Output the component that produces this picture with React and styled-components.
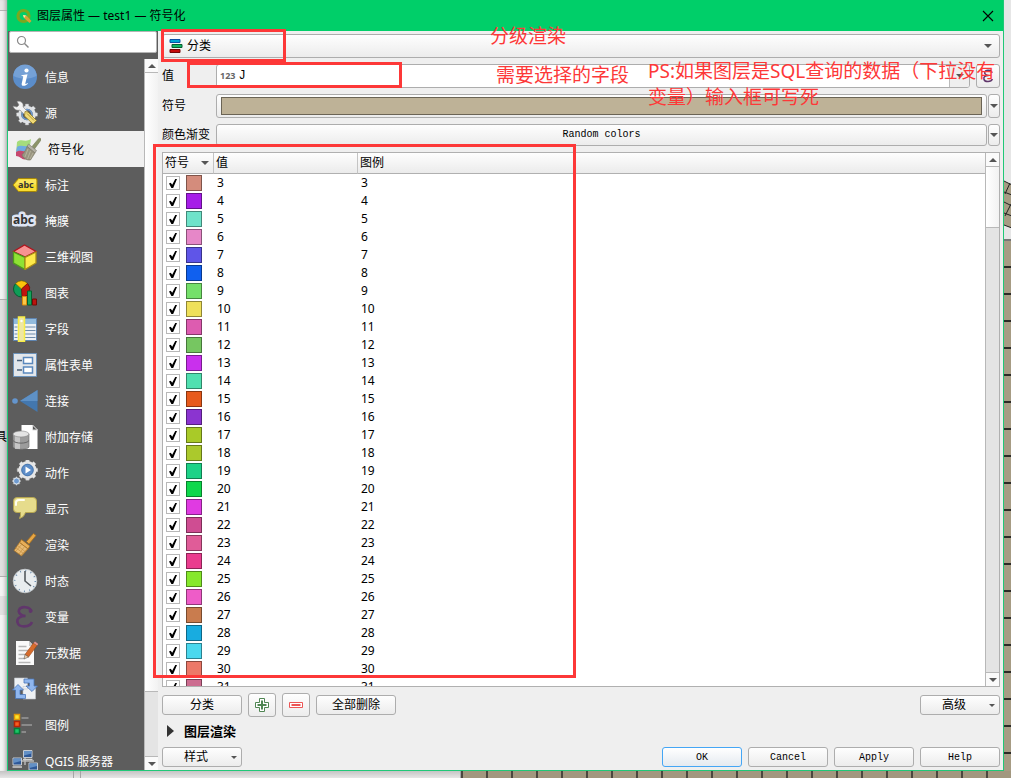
import { useState } from 'react';
import styled, { createGlobalStyle, css } from 'styled-components';

const GlobalStyle = createGlobalStyle`
    * {
        box-sizing: border-box;
    }
    body {
        margin: 0;
        font-family: 'Noto Sans', 'Noto Sans CJK SC', sans-serif;
        font-size: 12px;
        line-height: 18px;
        color: #000;
    }
    button, input, select {
        font: inherit;
        color: inherit;
        margin: 0;
        padding: 0;
    }
`;

const raised = css`
    border: 1px solid #adadad;
    border-radius: 3px;
    background: linear-gradient(#fefefe, #ececec);
`;

/* ---------- desktop behind the dialog ---------- */

const Desktop = styled.div`
    position: relative;
    display: grid;
    grid-template-columns: 7px 1fr 7px;
    grid-template-rows: 1fr 7px;
    height: 100vh;
    overflow: hidden;
    background: #e4e4e4;
`;

const LeftEdge = styled.div`
    display: flex;
    justify-content: flex-end;
    overflow: hidden;
    padding-top: 428px;
    box-shadow: inset -4px 0 4px -3px #999;
    background: linear-gradient(
        #e6e6e6 10px, #b5b5b5 10px 11px, #f3f3f3 11px 299px, #b0b0b0 299px 300px,
        #e0e0e0 300px 576px, #b0b0b0 576px 577px, #f4f4f4 577px 596px,
        #e2e2e2 596px 615px, #f4f4f4 615px
    );
`;

const RightEdge = styled.div`
    display: flex;
    flex-direction: column;
    overflow: hidden;
    background: #e6e6e6;
    svg {
        display: block;
        flex: none;
        margin-top: 180px;
    }
`;

const MapColumn = styled.div`
    flex: 1;
    margin-top: 9px;
    border-top: 2px solid #777;
    background: repeating-linear-gradient(#a79c84 0 25px, #2c2a26 25px 27px);
`;

const BottomEdge = styled.div`
    grid-column: 1 / -1;
    display: flex;
    background: linear-gradient(#c4c4c4, #e6e6e6);
`;

const EdgePiece = styled.div`
    width: ${({ $width }) => $width}px;
    border-right: 1px solid #a5a5a5;
`;

const MapRow = styled.div`
    flex: 1;
    background: repeating-linear-gradient(90deg, #4b473f 0 2px, #a2977f 2px 25px);
`;

/* ---------- dialog frame ---------- */

const Dialog = styled.main`
    display: flex;
    flex-direction: column;
    min-height: 0;
    border: 1px solid #1fc877;
    border-top: 0;
    background: #efefef;
`;

const TitleBar = styled.header`
    display: flex;
    align-items: center;
    gap: 5px;
    height: 31px;
    flex: none;
    padding: 0 9px 0 8px;
    background: #00cf69;
    h1 {
        flex: 1;
        margin: 0;
        font-size: 12px;
        font-weight: 400;
    }
`;

const CloseButton = styled.button`
    display: flex;
    border: 0;
    background: none;
`;

const Body = styled.div`
    display: flex;
    flex: 1;
    min-height: 0;
`;

/* ---------- sidebar ---------- */

const Sidebar = styled.aside`
    display: flex;
    flex-direction: column;
    width: 150px;
    flex: none;
    background: #5d5d5d;
`;

const SearchBox = styled.label`
    display: flex;
    align-items: center;
    gap: 4px;
    height: 22px;
    flex: none;
    margin: 0 1px 6px;
    padding-left: 6px;
    border: 1px solid #b4b4b4;
    border-radius: 2px;
    background: #fff;
    input {
        flex: 1;
        min-width: 0;
        border: 0;
        outline: 0;
        background: none;
    }
`;

const ListArea = styled.div`
    display: flex;
    flex: 1;
    min-height: 0;
`;

const NavList = styled.nav`
    flex: 1;
    overflow: hidden;
`;

const NavItem = styled.button`
    display: flex;
    align-items: center;
    gap: 7px;
    width: 100%;
    height: 36px;
    border: 0;
    padding-left: ${({ $active }) => ($active ? 7 : 4)}px;
    background: ${({ $active }) => ($active ? '#f0f0f0' : 'transparent')};
    color: ${({ $active }) => ($active ? '#000' : '#fff')};
    white-space: nowrap;
    svg {
        flex: none;
    }
    span {
        padding-top: 2px;
    }
`;

/* ---------- scroll bar ---------- */

const ScrollTrack = styled.div`
    display: flex;
    flex-direction: column;
    width: 14px;
    flex: none;
    background: #e4e4e4;
    border-left: 1px solid #b8b8b8;
`;

const ScrollArrow = styled.button`
    display: flex;
    align-items: center;
    justify-content: center;
    height: 14px;
    flex: none;
    border: 0;
    border-${({ $down }) => ($down ? 'top' : 'bottom')}: 1px solid #b8b8b8;
    background: #fafafa;
`;

const ScrollThumb = styled.div`
    flex: 0 0 ${({ $size }) => $size};
    border-bottom: 1px solid #b8b8b8;
    background: linear-gradient(90deg, #fff, #f2f2f2);
`;

const ScrollSpace = styled.div`
    flex: 1;
`;

const Caret = styled.span`
    width: 0;
    height: 0;
    flex: none;
    border: ${({ $small }) => ($small ? 3 : 4)}px solid transparent;
    border-top-color: #555;
    border-bottom-width: 0;
    transform: rotate(${({ $up }) => ($up ? 180 : 0)}deg);
`;

/* ---------- right panel ---------- */

const Panel = styled.section`
    display: flex;
    flex-direction: column;
    flex: 1;
    gap: 6px;
    min-width: 0;
    padding: 3px 3px 3px 4px;
`;

const FormRow = styled.div`
    display: flex;
    align-items: center;
    height: ${({ $short }) => ($short ? 22 : 24)}px;
    flex: none;
    > label {
        width: 54px;
        flex: none;
        white-space: nowrap;
    }
`;

const SelectBox = styled.div`
    ${raised}
    display: flex;
    align-items: center;
    gap: 4px;
    flex: none;
    height: 24px;
    padding: 0 7px 0 6px;
    select {
        flex: 1;
        appearance: none;
        border: 0;
        outline: 0;
        background: none;
    }
`;

const FieldBox = styled.div`
    display: flex;
    align-items: center;
    flex: 1;
    height: 24px;
    margin-right: 6px;
    border: 1px solid #adadad;
    border-radius: 3px;
    background: #fff;
    overflow: hidden;
    b {
        padding: 0 3px;
        font-size: 9px;
        color: #666;
    }
    input {
        flex: 1;
        min-width: 0;
        border: 0;
        outline: 0;
        background: none;
        font-family: 'Liberation Mono', monospace;
    }
`;

const DropPart = styled.button`
    display: flex;
    align-items: center;
    justify-content: center;
    align-self: stretch;
    width: 20px;
    border: 0;
    border-left: 1px solid #bbb;
    background: #efefef;
`;

const Button = styled.button`
    ${raised}
    display: flex;
    align-items: center;
    justify-content: center;
    height: 20px;
    width: 80px;
    flex: none;
    ${({ $mono }) => $mono && css`
        padding-top: 2px;
        font-family: 'Liberation Mono', monospace;
        font-size: 10px;
    `}
    ${({ $primary }) => $primary && css`
        border-color: #44a6f5;
        background: linear-gradient(#fff, #e4eaf0);
    `}
`;

const MenuButton = styled(Button)`
    padding-right: 4px;
    span:first-child {
        flex: 1;
        padding-right: 2px;
    }
`;

const IconButton = styled(Button)`
    width: ${({ $narrow }) => ($narrow ? 24 : 28)}px;
    height: 24px;
`;

const WideButton = styled(Button)`
    flex: 1;
    height: 100%;
    padding: 2px 4px;
`;

const SideArrow = styled(Button)`
    width: 12px;
    height: 100%;
    margin-left: 1px;
`;

const SymbolPreview = styled.span`
    flex: 1;
    height: 100%;
    border: 1px solid #6b6455;
    background: #beb297;
`;

/* ---------- class table ---------- */

const TableFrame = styled.div`
    display: flex;
    flex: 1;
    min-height: 0;
    border: 1px solid #b0b0b0;
    background: #fff;
`;

const TableClip = styled.div`
    flex: 1;
    overflow: hidden;
`;

const ClassTable = styled.table`
    width: 100%;
    table-layout: fixed;
    border-collapse: separate;
    border-spacing: 0;
    th {
        height: 21px;
        padding: 0 2px;
        border-right: 1px solid #c4c4c4;
        border-bottom: 1px solid #b0b0b0;
        background: linear-gradient(#fefefe, #ebebeb);
        font-weight: 400;
        text-align: left;
    }
    th:last-child {
        border-right: 0;
    }
    td {
        height: 18px;
        padding: 0 3px;
    }
`;

const HeaderCell = styled.div`
    display: flex;
    align-items: center;
    justify-content: space-between;
    padding-right: 2px;
`;

const SymbolCell = styled.div`
    display: flex;
    align-items: center;
    gap: 6px;
`;

const Check = styled.input`
    appearance: none;
    width: 14px;
    height: 14px;
    border: 1px solid #b8b8b8;
    background: #fff;
    &:checked::after {
        content: '';
        display: block;
        width: 8px;
        height: 9px;
        margin: 2px;
        background: #000;
        clip-path: polygon(0 50%, 22% 42%, 40% 65%, 78% 0, 100% 0, 52% 100%, 30% 100%);
    }
`;

const Swatch = styled.span`
    width: 16px;
    height: 16px;
    border: 1px solid rgba(0, 0, 0, 0.4);
    background: ${({ $color }) => $color};
`;

const ButtonRow = styled.div`
    display: flex;
    align-items: center;
    gap: 6px;
    flex: none;
`;

const Spacer = styled.div`
    flex: 1;
`;

const GroupTitle = styled.button`
    display: flex;
    align-items: center;
    gap: 10px;
    height: 18px;
    flex: none;
    padding: 0 0 2px 5px;
    border: 0;
    background: none;
    font-size: 13px;
    font-weight: 700;
`;

/* ---------- red markup over the dialog ---------- */

const MarkBox = styled.div`
    position: absolute;
    left: ${({ $x }) => $x}px;
    top: ${({ $y }) => $y}px;
    width: ${({ $w }) => $w}px;
    height: ${({ $h }) => $h}px;
    border: 3px solid #fd3838;
    pointer-events: none;
`;

const MarkText = styled.p`
    position: absolute;
    left: ${({ $x }) => $x}px;
    top: ${({ $y }) => $y}px;
    margin: 0;
    font-size: 19px;
    line-height: 26px;
    color: #fd3838;
    white-space: nowrap;
    pointer-events: none;
`;

/* ---------- icons ---------- */

const Icon = ({ children }) => (
    <svg width="26" height="26" viewBox="0 0 26 26" aria-hidden="true">{children}</svg>
);

const teeth = (cx, cy, r, w, h, fill, stroke) =>
    [0, 45, 90, 135, 180, 225, 270, 315].map(a => (
        <rect key={a} x={cx - w / 2} y={cy - r - h / 2} width={w} height={h} rx="0.6"
            fill={fill} stroke={stroke} strokeWidth="0.5" transform={`rotate(${a} ${cx} ${cy})`} />
    ));

const icons = {
    info: (
        <Icon>
            <circle cx="13" cy="13" r="12" fill="#5b8dca" />
            <path d="M1.5 12a11.500 11.500 0 0 1 23 0c-6 3-15 4-23 0z" fill="#75a1d6" />
            <circle cx="14.500" cy="6.500" r="2.100" fill="#fff" />
            <path d="M9.500 11.200l6-1-2.200 9.300c-.1.800.8.600 2.200-.5l.4.800c-2.200 2.400-6.800 3.200-6.200-.4l1.500-6.300c.2-.9-.5-1-1.800-1z" fill="#fff" />
        </Icon>
    ),
    source: (
        <Icon>
            {teeth(15, 14.500, 8.500, 3.600, 4, '#e6e8ea', '#9a9a9a')}
            <circle cx="15" cy="14.500" r="7.300" fill="none" stroke="#dfe2e5" strokeWidth="3" />
            <circle cx="15" cy="14.500" r="5" fill="#5d5d5d" stroke="#6f9bd0" strokeWidth="1.500" />
            <path d="M5 1.500c4-1 7 2 6 5.500l5 5-3 3-5-5c-3 1-6-.5-7-4l4 1 2-2z" fill="#f1f1f1" stroke="#8b8b8b" strokeWidth=".6" />
            <path d="M13 11.500l3 .5 8.500 8.500-3.500 3.500-8.500-8z" fill="#f1da78" stroke="#927c24" strokeWidth=".8" />
            <path d="M15 13.500l7 7" stroke="#b69b38" />
        </Icon>
    ),
    symbology: (
        <Icon>
            <path d="M2 6c5-4 8 1 14-3l-2 13c-4 2-7-1-13 2z" fill="#a5dc7c" />
            <path d="M2 11c5-3 8 1 12-2l-1 6c-4 1-7-1-12 1z" fill="#6eaae2" />
            <path d="M1 16c4-3 6 0 11-1l-1 8c-3 2-6-3-10-3z" fill="#c7486f" />
            <path d="M17 10.500l6.500-7.800c1.400-1.400 3.300.2 2.200 1.800L19.500 13z" fill="#8c9469" stroke="#6d7250" strokeWidth=".5" />
            <path d="M13.500 8l8 6.500-1.500 2.500-8-6.500z" fill="#b5b2a6" stroke="#77756b" strokeWidth=".6" />
            <path d="M12 10.500l8 6.500-4.500 7c-4 .5-8-2-8.500-5.500 2-1 4-5 5-8z" fill="#999580" stroke="#77735f" strokeWidth=".6" />
            <path d="M13 13l-3 8m5.500-6l-3 8m5.500-6l-3 6" stroke="#c2bea9" strokeWidth=".7" />
        </Icon>
    ),
    labels: (
        <Icon>
            <path d="M1 13l5.500-6.500h17q1.500 0 1.500 1.500v10q0 1.500-1.500 1.500h-17z" fill="#f8dc32" stroke="#a68708" />
            <path d="M7 7.500h17v5H3z" fill="#fdec78" opacity=".6" />
            <text x="6" y="16" fontFamily="Noto Sans" fontSize="9" fontWeight="700" fill="#333">abc</text>
        </Icon>
    ),
    mask: (
        <Icon>
            <text x="1" y="16" fontFamily="Noto Sans" fontSize="12" fontWeight="700" fill="#333"
                stroke="#dfe5f4" strokeWidth="5" strokeLinejoin="round" paintOrder="stroke">abc</text>
        </Icon>
    ),
    view3d: (
        <Icon>
            <path d="M12.500 1L24 7.500 13 13 1.500 7.500z" fill="#f79292" stroke="#b0141d" strokeWidth="1.300" />
            <path d="M1.500 8L13 13.500V25.500L1.500 19z" fill="#8fe234" stroke="#4d9b1d" strokeWidth="1.300" />
            <path d="M24 8L13 13.500V25.500L24 19z" fill="#fde94a" stroke="#a98d16" strokeWidth="1.300" />
        </Icon>
    ),
    chart: (
        <Icon>
            <circle cx="9.500" cy="9" r="8" fill="#0f9d57" stroke="#075c31" />
            <path d="M9.500 9L3.500 3.500A8 8 0 0 1 15.500 3.500z" fill="#fcc30b" stroke="#8b6a08" strokeWidth=".7" />
            <path d="M9.500 9L15.500 3.500A8 8 0 0 1 10 17z" fill="#c0150e" stroke="#6e0b08" strokeWidth=".7" />
            <path d="M10.500 16.500h4v8.500h-4z" fill="#fcc848" stroke="#db8b09" />
            <path d="M15.500 11h4v14h-4z" fill="#16a35d" stroke="#06602f" />
            <path d="M20.500 19h4v6h-4z" fill="#b9140e" stroke="#720a06" />
        </Icon>
    ),
    fields: (
        <Icon>
            <path d="M1.500 2.500h23v22h-23z" fill="#edf1f5" stroke="#5e84b0" />
            <path d="M2 3h22v5H2z" fill="#92bbdd" />
            <path d="M2.500 11h3m7 0h11m-21 3.500h3m7 0h11m-21 3.500h3m7 0h11m-21 3.500h3m7 0h11" stroke="#6e8cab" />
            <path d="M6.500 1h6v24.500h-6z" fill="#eee7a3" stroke="#f8ed45" strokeWidth="1.500" />
            <circle cx="9.500" cy="5" r="1.200" fill="#fff" />
        </Icon>
    ),
    form: (
        <Icon>
            <path d="M1.500 1.500h23v23h-23z" fill="#e3e7eb" stroke="#6d93ba" />
            <path d="M5 8.500h5M5 18h5" stroke="#4a6078" strokeWidth="1.500" />
            <path d="M11.500 5.500h9v6h-9zm0 9.500h9v6h-9z" fill="#fff" stroke="#5b89bd" strokeWidth="1.500" />
        </Icon>
    ),
    joins: (
        <Icon>
            <circle cx="3" cy="13" r="2.800" fill="#6495cd" />
            <path d="M25.500 2v22L8 13z" fill="#4377ae" />
            <path d="M25.500 2v11H8z" fill="#5e91c6" />
        </Icon>
    ),
    storage: (
        <Icon>
            <path d="M9.500 1h11l5 5v19h-16z" fill="#fff" />
            <path d="M20.500 1l5 5h-5z" fill="#555" stroke="#ddd" />
            <path d="M1 10v13c1 3 15 3 16 0V10z" fill="#9c9c9c" stroke="#6b6b6b" strokeWidth=".6" />
            <path d="M3 10v15h5V10z" fill="#d9d9d9" opacity=".7" />
            <ellipse cx="9" cy="10" rx="8" ry="3" fill="#e4e4e4" stroke="#888" strokeWidth=".6" />
            <path d="M1 16.500c2 3.500 14 3.500 16 0" fill="none" stroke="#666" />
        </Icon>
    ),
    actions: (
        <Icon>
            {teeth(15.500, 10, 8.500, 3.600, 3.600, '#e8e8e8', '#aaa')}
            <circle cx="15.500" cy="10" r="7.500" fill="#5d8dc8" stroke="#e6e6e6" strokeWidth="3" />
            <circle cx="15.500" cy="10" r="5.800" fill="none" stroke="#3a6aa3" strokeWidth=".8" />
            <path d="M13.500 6.500l5.500 3.500-5.500 3.500z" fill="#fff" />
            {teeth(4.500, 21, 3.400, 1.600, 1.600, '#dfe6ed', '#999')}
            <circle cx="4.500" cy="21" r="3" fill="#6f9bd0" stroke="#dfe6ed" />
        </Icon>
    ),
    display: (
        <Icon>
            <path d="M5 1.500h16q3.500 0 3.500 3.500v8q0 3.500-3.500 3.500h-7.500q-1.500 5-6 6 1.500-3 1-6H5q-3.500 0-3.500-3.500V5q0-3.500 3.500-3.500z" fill="#e6dc8c" stroke="#b6a651" />
            <path d="M4 9V6.500Q4 4 7 4h5" fill="none" stroke="#fffef0" strokeWidth="2" strokeLinecap="round" />
        </Icon>
    ),
    rendering: (
        <Icon>
            <path d="M14.500 9.500l7-8 2.500 2-7 8.500z" fill="#e7a645" stroke="#a46e1f" strokeWidth=".8" />
            <path d="M9.500 7.500l8.500 6.500-2 3-8.500-6.500z" fill="#e8ae58" stroke="#9f6a1b" strokeWidth=".8" />
            <path d="M7.500 10.500l8.500 6.500-6.500 7-7.500-5.500z" fill="#e8ba73" stroke="#a87427" strokeWidth=".8" />
            <path d="M5 13l8 6.500M3.500 15.500l8 6M10 12l-6 7m9-5l-6 8m8-5l-6 6" stroke="#c18b3c" strokeWidth=".6" />
        </Icon>
    ),
    temporal: (
        <Icon>
            <circle cx="13" cy="13" r="11.800" fill="#e9edef" stroke="#c7cdd1" strokeWidth=".8" />
            <circle cx="13" cy="13" r="10.300" fill="none" stroke="#6d8eae" strokeWidth="1.500" strokeDasharray="1 4.393" />
            <path d="M13 3v10l6 5" fill="none" stroke="#565b5f" strokeWidth="1.600" />
        </Icon>
    ),
    variables: (
        <Icon>
            <path d="M19.500 7.500C18.500 2.500 9 1.500 7 6c-1 3 2 5.500 6.500 6C8 12 4.500 14.500 5.500 18.500c1.500 5.500 12.500 5 14.500-.5" fill="none" stroke="#60366b" strokeWidth="2.600" />
            <circle cx="18.500" cy="7" r="1.900" fill="#60366b" />
        </Icon>
    ),
    metadata: (
        <Icon>
            <path d="M4 1h13l5 5v19H4z" fill="#fafafa" />
            <path d="M17 1l5 5h-5z" fill="#cbcbcb" />
            <path d="M6.500 6.500h8m-8 4h11m-11 4h8m-8 4h6m-6 4h12" stroke="#b6b6b6" strokeWidth="1.300" />
            <path d="M21.500 3l3.500 2.500-8.500 11.500-3.500-2.500z" fill="#d76c2c" stroke="#9b4616" strokeWidth=".6" />
            <path d="M13 14.500l3.500 2.500-4.500 2z" fill="#f0cfaa" stroke="#444" strokeWidth=".5" />
            <path d="M21.500 3l1.500-1.500 3.500 2.500-1.500 1.500z" fill="#e28f88" />
        </Icon>
    ),
    dependencies: (
        <Icon>
            <path d="M2.500 2h13v11h-13zM11 10.500h12.500V23H11z" fill="#eef1f4" stroke="#bfc4c9" strokeWidth=".6" />
            <path d="M12 3h10v7h3.500L20 15.500 14 10h3.500V7H12z" fill="#8fb6ee" stroke="#4a76b8" strokeWidth=".8" />
            <path d="M13.500 22.500h-10V14H.5L6 8.500l5.500 5.500H8v4.500h5.500z" fill="#8fb6ee" stroke="#4a76b8" strokeWidth=".8" />
        </Icon>
    ),
    legend: (
        <Icon>
            <path d="M2.500 2.500h5v5h-5z" fill="#fde42c" stroke="#df9808" strokeWidth="1.500" />
            <path d="M2.500 9.500h5v5h-5z" fill="#fa5d20" stroke="#b52305" strokeWidth="1.500" />
            <path d="M2.500 16.500h5v5h-5z" fill="#1ac667" stroke="#067d38" strokeWidth="1.500" />
            <path d="M9.500 6h7M9.500 13h10.500M9.500 20h4.500" stroke="#999" strokeWidth="1.600" />
        </Icon>
    ),
    server: (
        <Icon>
            <path d="M4 13h18M13 10v7" stroke="#b8b8b8" strokeWidth="1.500" />
            {[[11, 2], [.5, 9.500], [16.500, 14.500]].map(([x, y]) => (
                <g key={x} transform={`translate(${x} ${y})`}>
                    <path d="M.5.500h8.500v7H.5z" fill="#2e5898" stroke="#c5cbd2" />
                    <path d="M1 1h7.500v2.500L1 5.500z" fill="#6390c6" />
                    <path d="M0 9.500h9.500" stroke="#d1d1d1" strokeWidth="1.500" />
                </g>
            ))}
        </Icon>
    ),
};

const AppLogo = () => (
    <svg width="16" height="16" viewBox="0 0 16 16" aria-hidden="true">
        <circle cx="7.500" cy="8" r="5.500" fill="none" stroke="#7aa81f" strokeWidth="3.200" />
        <path d="M7 7l3.500.5L15.500 13l-2 2L8 10z" fill="#d8a237" />
        <path d="M7 7l3 .5-2 2.500z" fill="#eef0b0" />
    </svg>
);

const SearchIcon = () => (
    <svg width="14" height="14" viewBox="0 0 14 14" aria-hidden="true">
        <circle cx="5.500" cy="5.500" r="4" fill="none" stroke="#888" strokeWidth="1.200" />
        <path d="M8.500 8.500l4 4" stroke="#888" strokeWidth="1.500" />
    </svg>
);

const CategoryIcon = () => (
    <svg width="14" height="14" viewBox="0 0 14 14" aria-hidden="true">
        <path d="M1 .5h10v3H1z" fill="#00a5d4" stroke="#0a50a6" />
        <path d="M3 5.500h10v3H3z" fill="#10b764" stroke="#075b30" />
        <path d="M1 10.500h10v3H1z" fill="#c60909" stroke="#730505" />
    </svg>
);

const EpsilonIcon = () => (
    <svg width="12" height="14" viewBox="3 1 19 24" aria-hidden="true">
        <path d="M19.500 7.500C18.500 2.500 9 1.500 7 6c-1 3 2 5.500 6.500 6C8 12 4.500 14.500 5.500 18.500c1.500 5.500 12.500 5 14.500-.5" fill="none" stroke="#60366b" strokeWidth="2.600" />
    </svg>
);

const PlusIcon = () => (
    <svg width="16" height="16" viewBox="0 0 16 16" aria-hidden="true">
        <path d="M5.500 1.500h5v4h4v5h-4v4h-5v-4h-4v-5h4z" fill="#fff" stroke="#4f8552" />
        <path d="M8 3.500v9M3.500 8h9" stroke="#4f8552" strokeWidth="2" />
    </svg>
);

const MinusIcon = () => (
    <svg width="16" height="16" viewBox="0 0 16 16" aria-hidden="true">
        <path d="M1.500 5.500h13v5h-13z" fill="#fff" stroke="#ec5555" />
        <path d="M3.500 8h9" stroke="#ec5555" strokeWidth="2" />
    </svg>
);

const pages = [
    ['info', '信息'],
    ['source', '源'],
    ['symbology', '符号化'],
    ['labels', '标注'],
    ['mask', '掩膜'],
    ['view3d', '三维视图'],
    ['chart', '图表'],
    ['fields', '字段'],
    ['form', '属性表单'],
    ['joins', '连接'],
    ['storage', '附加存储'],
    ['actions', '动作'],
    ['display', '显示'],
    ['rendering', '渲染'],
    ['temporal', '时态'],
    ['variables', '变量'],
    ['metadata', '元数据'],
    ['dependencies', '相依性'],
    ['legend', '图例'],
    ['server', 'QGIS 服务器'],
];

// the first class has the value 3
const classColors = [
    '#d48c7c', '#a61de8', '#6fe3ca', '#e687c8', '#5f55e8', '#1060ef', '#75e06a', '#efe05a',
    '#dd5cb0', '#76c661', '#c930ed', '#50e0b0', '#e75a1c', '#8b34d0', '#a9ca28', '#abc92c',
    '#1dd287', '#0ed84c', '#e03ae2', '#cf4d92', '#e05c98', '#ea3c8e', '#86e82c', '#ee5cc8',
    '#c97c4e', '#18ace0', '#4ad8ee', '#ec7868', '#cc6c90',
];

const ScrollBar = ({ size }) => (
    <ScrollTrack>
        <ScrollArrow aria-label="向上"><Caret $up /></ScrollArrow>
        <ScrollThumb $size={size} />
        <ScrollSpace />
        <ScrollArrow $down aria-label="向下"><Caret /></ScrollArrow>
    </ScrollTrack>
);

const App = () => {
    const [page, setPage] = useState('symbology');
    const [field, setField] = useState('J');

    return (
        <Desktop>
            <GlobalStyle />
            <LeftEdge>具</LeftEdge>
            <Dialog>
                <TitleBar>
                    <AppLogo />
                    <h1>图层属性 — test1 — 符号化</h1>
                    <CloseButton aria-label="关闭">
                        <svg width="12" height="12" viewBox="0 0 12 12">
                            <path d="M1 1l10 10M11 1L1 11" stroke="#000" strokeWidth="1.100" />
                        </svg>
                    </CloseButton>
                </TitleBar>
                <Body>
                    <Sidebar>
                        <SearchBox>
                            <SearchIcon />
                            <input type="text" aria-label="搜索" />
                        </SearchBox>
                        <ListArea>
                            <NavList>
                                {pages.map(([id, name]) => (
                                    <NavItem key={id} $active={id === page} onClick={() => setPage(id)}>
                                        {icons[id]}
                                        <span>{name}</span>
                                    </NavItem>
                                ))}
                            </NavList>
                            <ScrollBar size="87%" />
                        </ListArea>
                    </Sidebar>
                    <Panel>
                        <SelectBox>
                            <CategoryIcon />
                            <select aria-label="渲染方式">
                                <option>分类</option>
                            </select>
                            <Caret />
                        </SelectBox>
                        <FormRow>
                            <label htmlFor="field">值</label>
                            <FieldBox>
                                <b>123</b>
                                <input id="field" type="text" value={field} onChange={e => setField(e.target.value)} />
                                <DropPart aria-label="选择字段"><Caret /></DropPart>
                            </FieldBox>
                            <IconButton $narrow aria-label="表达式"><EpsilonIcon /></IconButton>
                        </FormRow>
                        <FormRow>
                            <label htmlFor="symbol">符号</label>
                            <WideButton id="symbol"><SymbolPreview /></WideButton>
                            <SideArrow aria-label="符号菜单"><Caret /></SideArrow>
                        </FormRow>
                        <FormRow $short>
                            <label htmlFor="ramp">颜色渐变</label>
                            <WideButton id="ramp" $mono>Random colors</WideButton>
                            <SideArrow aria-label="渐变菜单"><Caret /></SideArrow>
                        </FormRow>
                        <TableFrame>
                            <TableClip>
                                <ClassTable>
                                    <colgroup>
                                        <col width="51" />
                                        <col width="144" />
                                        <col />
                                    </colgroup>
                                    <thead>
                                        <tr>
                                            <th><HeaderCell>符号<Caret /></HeaderCell></th>
                                            <th>值</th>
                                            <th>图例</th>
                                        </tr>
                                    </thead>
                                    <tbody>
                                        {classColors.map((color, i) => (
                                            <tr key={color}>
                                                <td>
                                                    <SymbolCell>
                                                        <Check type="checkbox" defaultChecked aria-label={`${i + 3}`} />
                                                        <Swatch $color={color} />
                                                    </SymbolCell>
                                                </td>
                                                <td>{i + 3}</td>
                                                <td>{i + 3}</td>
                                            </tr>
                                        ))}
                                    </tbody>
                                </ClassTable>
                            </TableClip>
                            <ScrollBar size="61px" />
                        </TableFrame>
                        <ButtonRow>
                            <Button>分类</Button>
                            <IconButton aria-label="添加"><PlusIcon /></IconButton>
                            <IconButton aria-label="删除"><MinusIcon /></IconButton>
                            <Button>全部删除</Button>
                            <Spacer />
                            <MenuButton><span>高级</span><Caret $small /></MenuButton>
                        </ButtonRow>
                        <GroupTitle>
                            <svg width="7" height="12" viewBox="0 0 7 12"><path d="M0 0l7 6-7 6z" fill="#333" /></svg>
                            图层渲染
                        </GroupTitle>
                        <ButtonRow>
                            <MenuButton><span>样式</span><Caret $small /></MenuButton>
                            <Spacer />
                            <Button $mono $primary>OK</Button>
                            <Button $mono>Cancel</Button>
                            <Button $mono>Apply</Button>
                            <Button $mono>Help</Button>
                        </ButtonRow>
                    </Panel>
                </Body>
            </Dialog>
            <RightEdge>
                <svg width="8" height="50" viewBox="0 0 8 50">
                    <path d="M0 1l8 4v43l-8-3z" fill="#a79c84" />
                    <path d="M0 1l8 4M0 12l8 3M0 22l8 4M0 33l8 3M0 45l8 3M1 14L6 3M1 36l6-12" stroke="#222" fill="none" />
                </svg>
                <MapColumn />
            </RightEdge>
            <BottomEdge>
                <EdgePiece $width={74} />
                <EdgePiece $width={7} />
                <EdgePiece $width={380} />
                <MapRow />
            </BottomEdge>
            <MarkBox $x={161} $y={29} $w={125} $h={33} />
            <MarkBox $x={187} $y={62} $w={215} $h={26} />
            <MarkBox $x={153} $y={144} $w={423} $h={534} />
            <MarkText $x={490} $y={23}>分级渲染</MarkText>
            <MarkText $x={496} $y={62}>需要选择的字段</MarkText>
            <MarkText $x={648} $y={58}>
                PS:如果图层是SQL查询的数据（下拉没有<br />变量）输入框可写死
            </MarkText>
        </Desktop>
    );
};

export default App;
